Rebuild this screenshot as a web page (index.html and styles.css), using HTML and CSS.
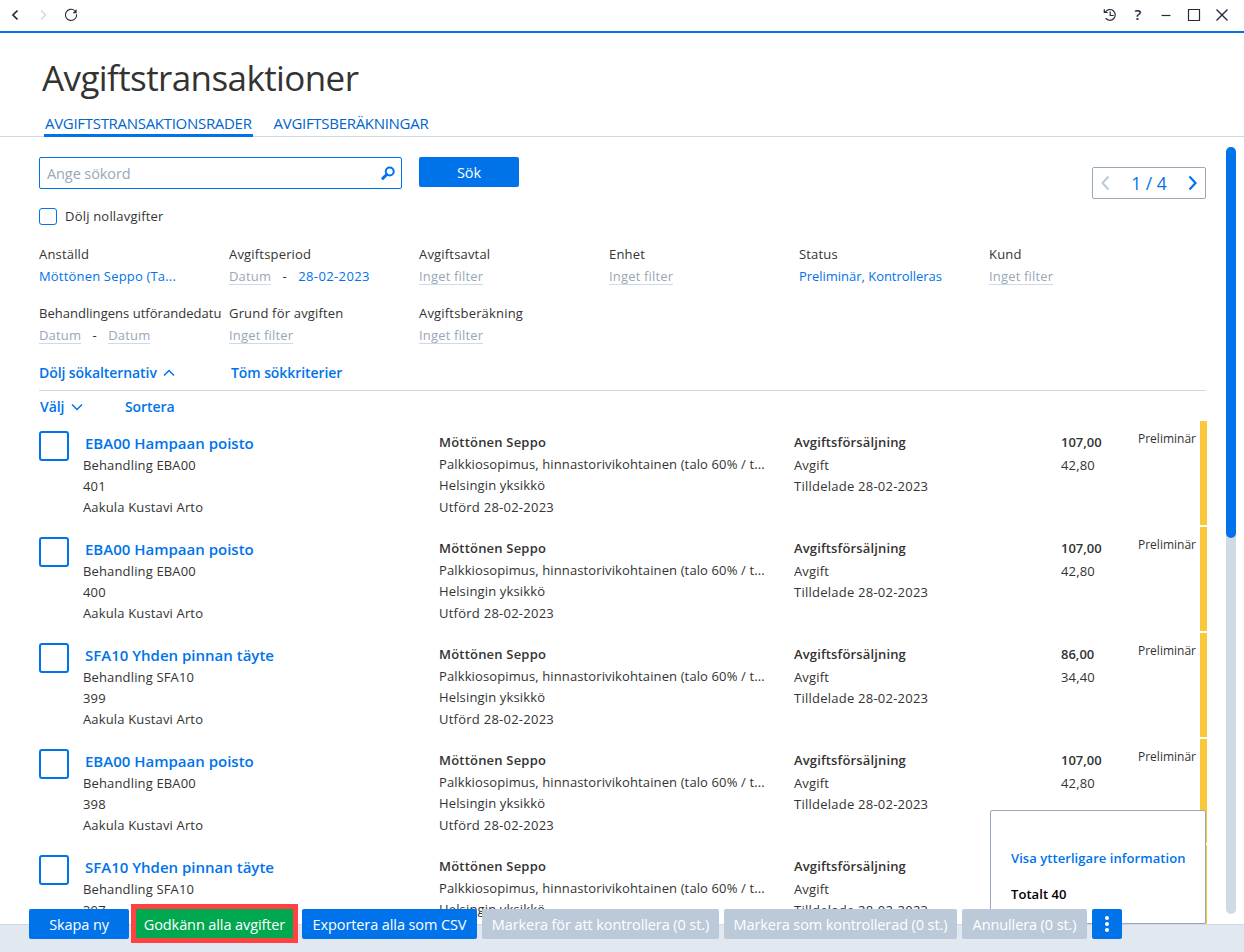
FILE: index.html
```html
<!DOCTYPE html>
<html lang="sv">

<head>
    <meta charset="UTF-8">
    <meta name="viewport" content="width=device-width, initial-scale=1.0">
    <title>Avgiftstransaktioner</title>
    <link rel="stylesheet" href="styles.css">
</head>

<body>
    <header class="topbar">
        <div class="nav-icons">
            <svg width="16" height="16" viewBox="0 0 16 16"><path d="M10.500 3.500 6 8l4.500 4.500" stroke-width="1.700" /></svg>
            <svg class="faded" width="16" height="16" viewBox="0 0 16 16"><path d="M6 3.500 10.500 8 6 12.500" stroke-width="1.500" /></svg>
            <svg width="16" height="16" viewBox="0 0 16 16"><path d="M11.700 3.600A5.600 5.600 0 1 0 13.600 7.200" stroke-width="1.100" /><path class="solid" d="M13.600 2v4.200H9.600z" /></svg>
        </div>
        <div class="window-icons">
            <svg width="16" height="16" viewBox="0 0 16 16"><path d="M3.300 5A5.400 5.400 0 1 1 3.600 11.200M2.300 2.300v3.200h3.400M8.200 4.500v4h3.500" stroke-width="1.200" /></svg>
            <span class="help">?</span>
            <svg width="16" height="16" viewBox="0 0 16 16"><path d="M3.500 8.500h9" stroke-width="1.200" /></svg>
            <svg width="16" height="16" viewBox="0 0 16 16"><path d="M2.500 2.500h11v11h-11z" stroke-width="1.200" /></svg>
            <svg width="16" height="16" viewBox="0 0 16 16"><path d="M2.500 2.500l11 11M13.500 2.500l-11 11" stroke-width="1.400" /></svg>
        </div>
    </header>

    <h1>Avgiftstransaktioner</h1>
    <nav class="tabs">
        <a class="tab active">AVGIFTSTRANSAKTIONSRADER</a>
        <a class="tab">AVGIFTSBERÄKNINGAR</a>
    </nav>

    <main>
        <div class="content">
            <!-- Search -->
            <div class="search-row">
                <div class="search">
                    <span>Ange sökord</span>
                    <svg width="16" height="16" viewBox="0 0 16 16"><circle cx="9.700" cy="6.500" r="4" stroke-width="2" /><path d="M6.800 9.500 2.800 13.300" stroke-width="3" stroke-linecap="round" /></svg>
                </div>
                <button class="btn search-btn">Sök</button>
                <div class="pager">
                    <svg class="prev" width="12" height="16" viewBox="0 0 12 16"><path d="M9.500 1.500 3.500 8l6 6.500" stroke-width="2" /></svg>
                    <span>1 / 4</span>
                    <svg width="12" height="16" viewBox="0 0 12 16"><path d="M2.500 1.500 8.500 8l-6 6.500" stroke-width="2.200" /></svg>
                </div>
            </div>
            <label class="hide-zero"><span class="box small"></span>Dölj nollavgifter</label>

            <!-- Filters -->
            <div class="filters">
                <div><p>Anställd</p><a>Möttönen Seppo (Ta...</a></div>
                <div><p>Avgiftsperiod</p><a class="empty">Datum</a><i>-</i><a class="date">28-02-2023</a></div>
                <div><p>Avgiftsavtal</p><a class="empty">Inget filter</a></div>
                <div><p>Enhet</p><a class="empty">Inget filter</a></div>
                <div><p>Status</p><a class="statuses">Preliminär, Kontrolleras</a></div>
                <div><p>Kund</p><a class="empty">Inget filter</a></div>
                <div><p class="long">Behandlingens utförandedatu</p><a class="empty">Datum</a><i>-</i><a class="empty">Datum</a></div>
                <div><p>Grund för avgiften</p><a class="empty">Inget filter</a></div>
                <div><p>Avgiftsberäkning</p><a class="empty">Inget filter</a></div>
            </div>
            <div class="links search-links">
                <a>Dölj sökalternativ <svg width="12" height="8" viewBox="0 0 12 8"><path d="M1 6.500l5-5 5 5" stroke-width="1.500" /></svg></a>
                <a>Töm sökkriterier</a>
            </div>
            <div class="links list-links">
                <a>Välj <svg width="12" height="8" viewBox="0 0 12 8"><path d="M1 1.500l5 5 5-5" stroke-width="1.500" /></svg></a>
                <a>Sortera</a>
            </div>

            <!-- Transactions -->
            <div class="row">
                <span class="box"></span>
                <div class="treatment"><h2>EBA00 Hampaan poisto</h2><p>Behandling EBA00</p><p>401</p><p>Aakula Kustavi Arto</p></div>
                <div class="contract"><b>Möttönen Seppo</b><p>Palkkiosopimus, hinnastorivikohtainen (talo 60% / t...</p><p>Helsingin yksikkö</p><p>Utförd 28-02-2023</p></div>
                <div class="type"><b>Avgiftsförsäljning</b><p>Avgift</p><p>Tilldelade 28-02-2023</p></div>
                <div class="sum"><b>107,00</b><p>42,80</p></div>
                <div class="status">Preliminär</div>
            </div>
            <div class="row">
                <span class="box"></span>
                <div class="treatment"><h2>EBA00 Hampaan poisto</h2><p>Behandling EBA00</p><p>400</p><p>Aakula Kustavi Arto</p></div>
                <div class="contract"><b>Möttönen Seppo</b><p>Palkkiosopimus, hinnastorivikohtainen (talo 60% / t...</p><p>Helsingin yksikkö</p><p>Utförd 28-02-2023</p></div>
                <div class="type"><b>Avgiftsförsäljning</b><p>Avgift</p><p>Tilldelade 28-02-2023</p></div>
                <div class="sum"><b>107,00</b><p>42,80</p></div>
                <div class="status">Preliminär</div>
            </div>
            <div class="row">
                <span class="box"></span>
                <div class="treatment"><h2>SFA10 Yhden pinnan täyte</h2><p>Behandling SFA10</p><p>399</p><p>Aakula Kustavi Arto</p></div>
                <div class="contract"><b>Möttönen Seppo</b><p>Palkkiosopimus, hinnastorivikohtainen (talo 60% / t...</p><p>Helsingin yksikkö</p><p>Utförd 28-02-2023</p></div>
                <div class="type"><b>Avgiftsförsäljning</b><p>Avgift</p><p>Tilldelade 28-02-2023</p></div>
                <div class="sum"><b>86,00</b><p>34,40</p></div>
                <div class="status">Preliminär</div>
            </div>
            <div class="row">
                <span class="box"></span>
                <div class="treatment"><h2>EBA00 Hampaan poisto</h2><p>Behandling EBA00</p><p>398</p><p>Aakula Kustavi Arto</p></div>
                <div class="contract"><b>Möttönen Seppo</b><p>Palkkiosopimus, hinnastorivikohtainen (talo 60% / t...</p><p>Helsingin yksikkö</p><p>Utförd 28-02-2023</p></div>
                <div class="type"><b>Avgiftsförsäljning</b><p>Avgift</p><p>Tilldelade 28-02-2023</p></div>
                <div class="sum"><b>107,00</b><p>42,80</p></div>
                <div class="status">Preliminär</div>
            </div>
            <div class="row">
                <span class="box"></span>
                <div class="treatment"><h2>SFA10 Yhden pinnan täyte</h2><p>Behandling SFA10</p><p>397</p></div>
                <div class="contract"><b>Möttönen Seppo</b><p>Palkkiosopimus, hinnastorivikohtainen (talo 60% / t...</p><p>Helsingin yksikkö</p></div>
                <div class="type"><b>Avgiftsförsäljning</b><p>Avgift</p><p>Tilldelade 28-02-2023</p></div>
            </div>
        </div>
        <div class="scrollbar"><div class="thumb"></div></div>
        <aside class="totals">
            <a>Visa ytterligare information</a>
            <p>Totalt 40</p>
        </aside>
    </main>

    <footer>
        <button class="btn create">Skapa ny</button>
        <button class="btn approve">Godkänn alla avgifter</button>
        <button class="btn export">Exportera alla som CSV</button>
        <button class="btn off check">Markera för att kontrollera (0 st.)</button>
        <button class="btn off checked">Markera som kontrollerad (0 st.)</button>
        <button class="btn off cancel">Annullera (0 st.)</button>
        <button class="btn more"><svg width="6" height="18" viewBox="0 0 6 18"><circle cx="3" cy="3" r="2" /><circle cx="3" cy="9" r="2" /><circle cx="3" cy="15" r="2" /></svg></button>
    </footer>
</body>

</html>
```
FILE: styles.css
```css
* {
    box-sizing: border-box;
}

body {
    margin: 0;
    height: 952px;
    display: flex;
    flex-direction: column;
    overflow: hidden;
    background: #fff;
    color: #333;
    font-family: "Open Sans", "Noto Sans", sans-serif;
    font-size: 13px;
}

h1, h2, p {
    margin: 0;
}

svg {
    fill: none;
    stroke: currentColor;
    flex: none;
}

.solid {
    fill: currentColor;
    stroke: none;
}

/* Top bar */
.topbar {
    height: 33px;
    flex: none;
    display: flex;
    justify-content: space-between;
    padding: 0 14px 1px 7px;
    border-bottom: 2px solid #0073eb;
    color: #222b38;
}

.nav-icons, .window-icons {
    display: flex;
    align-items: center;
    gap: 12px;
}

.faded {
    color: #d0dae6;
}

.help {
    width: 16px;
    padding-bottom: 2px;
    text-align: center;
    font-size: 15px;
    font-weight: 600;
}

h1 {
    height: 78px;
    flex: none;
    padding-left: 42px;
    line-height: 90px;
    font-size: 35px;
    font-weight: 400;
    letter-spacing: -0.6px;
}

.tabs {
    height: 26px;
    flex: none;
    display: flex;
    gap: 20px;
    padding-left: 44px;
    border-bottom: 1px solid #d0dae6;
}

.tab {
    height: 26px;
    padding: 0 1px;
    line-height: 24px;
    font-size: 15px;
    color: #0065cc;
    letter-spacing: -0.3px;
}

.active {
    border-bottom: 3px solid #0073eb;
}

main {
    position: relative;
    flex: 1;
    min-height: 0;
    display: flex;
    justify-content: space-between;
    overflow: hidden;
    padding: 10px 8px 0 39px;
}

.content {
    width: 1168px;
    padding-top: 10px;
}

.scrollbar {
    width: 10px;
    height: 767px;
    border-radius: 5px;
    background: #d0dae4;
}

.thumb {
    height: 391px;
    border-radius: 5px;
    background: #0073eb;
}

/* Search */
.search-row {
    display: flex;
    align-items: flex-start;
    height: 51px;
}

.search {
    width: 363px;
    height: 32px;
    display: flex;
    align-items: center;
    justify-content: space-between;
    padding: 0 5px 0 7px;
    border: 1px solid #0073eb;
    border-radius: 2px;
    color: #98a8b8;
    font-size: 14.5px;
    letter-spacing: -0.1px;
}

.search svg {
    color: #0073eb;
}

.btn {
    height: 30px;
    padding: 0;
    border: 0;
    border-radius: 2px;
    background: #0073eb;
    color: #fff;
    font-family: inherit;
    font-size: 14.5px;
    letter-spacing: -0.1px;
    line-height: 32px;
    white-space: nowrap;
}

.search-btn {
    width: 100px;
    margin-left: 17px;
}

.pager {
    width: 114px;
    height: 32px;
    margin: 10px 1px 0 auto;
    padding: 0 6px 1px;
    display: flex;
    align-items: center;
    justify-content: space-between;
    border: 1px solid #98a8b8;
    border-radius: 2px;
    color: #0073eb;
    font-size: 17.5px;
}

.prev {
    color: #bcc9d8;
}

.hide-zero {
    display: flex;
    align-items: center;
    gap: 8px;
    height: 17px;
    letter-spacing: 0.2px;
    line-height: 15px;
}

.box {
    width: 30px;
    height: 30px;
    flex: none;
    border: 2px solid #0073eb;
    border-radius: 3px;
}

.small {
    width: 18px;
    height: 17px;
    border-width: 1px;
}

/* Filters */
.filters {
    display: grid;
    grid-template-columns: repeat(6, 190px);
    grid-auto-rows: 59px;
    margin-top: 17px;
    letter-spacing: 0.18px;
    white-space: nowrap;
}

.filters p {
    height: 25px;
    line-height: 24px;
}

.filters .long {
    letter-spacing: 0.03px;
}

.filters a {
    display: inline-block;
    height: 18px;
    line-height: 18px;
    color: #0073eb;
}

.filters .statuses {
    letter-spacing: -0.03px;
}

.filters .date {
    letter-spacing: 0.38px;
}

.filters .empty {
    color: #98a8b8;
    border-bottom: 1px solid #d0dae6;
}

.filters i {
    display: inline-block;
    width: 27px;
    text-align: center;
    font-style: normal;
}

.links {
    display: flex;
    color: #0073eb;
    font-size: 14px;
    font-weight: 600;
    letter-spacing: -0.08px;
}

.search-links {
    width: 1167px;
    height: 31px;
    line-height: 26px;
    border-bottom: 1px solid #d0dae6;
}

.search-links a:first-child {
    width: 192px;
}

.list-links {
    height: 30px;
    line-height: 31px;
}

.list-links a:first-child {
    width: 86px;
    padding-left: 1px;
}

.links svg {
    margin: 0 0 1px 3px;
}

/* Transactions */
.row {
    height: 104px;
    margin-bottom: 2px;
    display: flex;
    border-right: 7px solid #fbc73c;
    white-space: nowrap;
}

.row .box {
    margin-top: 10px;
}

.row p {
    line-height: 21px;
    letter-spacing: 0.15px;
}

.row b {
    display: block;
    font-weight: 600;
}

.treatment {
    width: 370px;
    padding: 11px 0 0 14px;
}

.treatment h2 {
    height: 23px;
    padding-left: 2px;
    line-height: 23px;
    font-size: 15px;
    font-weight: 600;
    color: #0073eb;
}

.contract {
    width: 355px;
    padding-top: 11px;
}

.contract b {
    height: 22px;
    line-height: 21px;
    letter-spacing: 0.2px;
}

.contract p:nth-child(2) {
    letter-spacing: 0.12px;
}

.contract p:nth-child(4) {
    line-height: 23px;
    letter-spacing: 0.25px;
}

.type {
    width: 267px;
}

.sum {
    width: 77px;
}

.type, .sum {
    padding-top: 11px;
}

.type b, .sum b {
    height: 23px;
    line-height: 21px;
}

.type b {
    letter-spacing: 0.15px;
}

.type p:last-child {
    letter-spacing: 0.24px;
}

.sum p {
    letter-spacing: 0.15px;
}

.status {
    padding-top: 9px;
    font-size: 12px;
}

.totals {
    position: absolute;
    right: 38px;
    bottom: 0;
    width: 216px;
    height: 114px;
    padding: 37px 0 0 20px;
    border: 1px solid #98a8b8;
    border-radius: 2px;
    background: #fff;
    color: #000;
    font-weight: 600;
    letter-spacing: 0.06px;
    line-height: 20px;
    white-space: nowrap;
}

.totals a {
    display: block;
    margin-bottom: 16px;
    color: #0073eb;
}

/* Actions overlap the list above */
footer {
    position: relative;
    height: 28px;
    flex: none;
    display: flex;
    gap: 5px;
    padding-left: 29px;
    border-top: 1px solid #d0dae6;
    background: #e1e8ef;
}

footer .btn {
    margin-top: -16px;
}

footer .create {
    width: 100px;
}

footer .approve {
    width: 167px;
    height: 39px;
    margin: -21px -1px 0 -3px;
    border: 5px solid #ff4242;
    border-radius: 0;
    background: #00a850;
    line-height: 31px;
}

.export {
    width: 175px;
}

.off {
    background: #bcc9d8;
}

.check {
    width: 237px;
}

.checked {
    width: 233px;
}

.cancel {
    width: 125px;
}

.more {
    width: 30px;
    display: flex;
    align-items: center;
    justify-content: center;
}

.more svg {
    fill: #fff;
    stroke: none;
}
```
